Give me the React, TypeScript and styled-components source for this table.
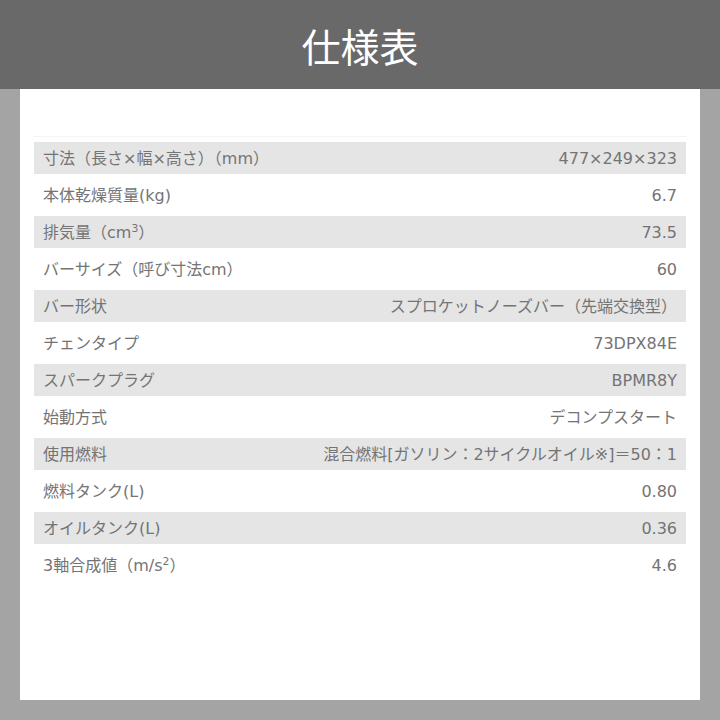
import styled, {createGlobalStyle} from "styled-components";

const GlobalStyle = createGlobalStyle`
  html, body {
    margin: 0;
    padding: 0;
    background: #a4a4a4;
  }
  body {
    font-family: "Noto Sans CJK JP", "Noto Sans", sans-serif;
  }
`;

const Page = styled.div`
  width: 720px;
  height: 720px;
  display: flex;
  flex-direction: column;
  background: #a4a4a4;
`;

const Header = styled.header`
  height: 89px;
  background: #696969;
  display: flex;
  align-items: center;
  justify-content: center;
`;

const Title = styled.h1`
  margin: 0;
  color: #ffffff;
  font-size: 39px;
  font-weight: 400;
  line-height: 1;
  padding-top: 2px;
`;

const Panel = styled.main`
  margin: 0 20px;
  height: 611px;
  background: #ffffff;
  padding: 47px 14px 0;
  box-sizing: border-box;
`;

const SpecList = styled.div`
  border-top: 1px solid #f4f4f4;
  padding-top: 5px;
  display: flex;
  flex-direction: column;
  gap: 5px;
`;

const Row = styled.div<{$shaded: boolean}>`
  height: 32px;
  box-sizing: border-box;
  padding: 2px 9px 0;
  display: flex;
  align-items: center;
  justify-content: space-between;
  background: ${(props) => (props.$shaded ? "#e5e5e5" : "#ffffff")};
  color: #747474;
  font-family: "DejaVu Sans", "Noto Sans CJK JP", sans-serif;
  font-size: 16px;
  line-height: 1;
`;

const Label = styled.span`
  white-space: nowrap;
`;

const Value = styled.span`
  white-space: nowrap;
  text-align: right;
`;

const Sup = styled.sup`
  font-size: 0.68em;
  vertical-align: 0.55em;
  line-height: 0;
`;

const specs: {label: React.ReactNode; value: string}[] = [
  {label: "寸法（長さ×幅×高さ）（mm）", value: "477×249×323"},
  {label: "本体乾燥質量(kg)", value: "6.7"},
  {
    label: (
      <>
        排気量（cm<Sup>3</Sup>）
      </>
    ),
    value: "73.5",
  },
  {label: "バーサイズ（呼び寸法cm）", value: "60"},
  {label: "バー形状", value: "スプロケットノーズバー（先端交換型）"},
  {label: "チェンタイプ", value: "73DPX84E"},
  {label: "スパークプラグ", value: "BPMR8Y"},
  {label: "始動方式", value: "デコンプスタート"},
  {label: "使用燃料", value: "混合燃料[ガソリン：2サイクルオイル※]＝50：1"},
  {label: "燃料タンク(L)", value: "0.80"},
  {label: "オイルタンク(L)", value: "0.36"},
  {
    label: (
      <>
        3軸合成値（m/s<Sup>2</Sup>）
      </>
    ),
    value: "4.6",
  },
];

const App = () => {
  return (
    <>
      <GlobalStyle />
      <Page>
        <Header>
          <Title>仕様表</Title>
        </Header>
        <Panel>
          <SpecList>
            {specs.map((spec, i) => (
              <Row key={i} $shaded={i % 2 === 0}>
                <Label>{spec.label}</Label>
                <Value>{spec.value}</Value>
              </Row>
            ))}
          </SpecList>
        </Panel>
      </Page>
    </>
  );
};

export default App;
